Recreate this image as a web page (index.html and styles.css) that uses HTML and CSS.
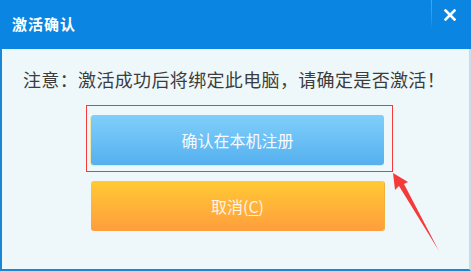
FILE: index.html
```html
<!DOCTYPE html>
<html lang="zh">
<head>
<meta charset="utf-8">
<link rel="stylesheet" href="styles.css">
</head>
<body>
<div class="window">
  <div class="titlebar">
    <span class="title">激活确认</span>
    <div class="title-tools">
      <span class="sep"></span>
      <button class="close" aria-label="关闭">
        <svg width="12" height="12" viewBox="0 0 12 12"><path d="M1.5 1.5 L10.5 10.5 M10.5 1.5 L1.5 10.5" stroke="#fff" stroke-width="2.6" stroke-linecap="square"/></svg>
      </button>
    </div>
  </div>
  <div class="content">
    <p class="notice">注意：激活成功后将绑定此电脑，请确定是否激活！</p>
    <div class="highlight">
      <button class="btn btn-blue">确认在本机注册</button>
    </div>
    <button class="btn btn-orange">取消(<u>C</u>)</button>
  </div>
  <svg class="arrow" width="60" height="90" viewBox="0 0 60 90">
    <polygon points="3,2 5,19 9,15 49,80 14,13 18,11" fill="#f53a3a"/>
  </svg>
</div>
</body>
</html>
```

FILE: styles.css
```css
* { box-sizing: border-box; }
html, body {
  margin: 0;
  padding: 0;
  width: 471px;
  height: 271px;
  overflow: hidden;
  background: #eef8fb;
}
.window {
  position: relative;
  width: 471px;
  height: 271px;
  display: flex;
  flex-direction: column;
  background: #eef8fb;
  border-left: 2px solid #1a86d6;
  border-right: 2px solid #c9dde8;
  border-bottom: 2px solid #1a86d6;
  font-family: "Noto Sans CJK SC", "Noto Sans", sans-serif;
}
.titlebar {
  height: 49px;
  margin-left: -2px;
  margin-right: -2px;
  background: #0a85e2;
  display: flex;
  align-items: flex-start;
  justify-content: space-between;
  flex-shrink: 0;
}
.title {
  color: #fff;
  font-weight: bold;
  font-size: 15px;
  letter-spacing: 1px;
  line-height: 20px;
  margin-top: 14px;
  margin-left: 12px;
}
.title-tools {
  display: flex;
  align-items: flex-start;
  height: 30px;
}
.sep {
  width: 1px;
  height: 29px;
  background: linear-gradient(#4aa6ea, #2a95e4 70%, #0a85e2);
}
.close {
  border: 0;
  background: transparent;
  padding: 0;
  margin: 9px 15px 0 12px;
  width: 12px;
  height: 12px;
  display: flex;
}
.content {
  display: flex;
  flex-direction: column;
  padding-top: 18px;
}
.notice {
  margin: 0 0 0 21px;
  font-size: 18px;
  line-height: 24px;
  color: #3c3c3c;
  white-space: nowrap;
  letter-spacing: 0.35px;
}
.highlight {
  margin: 14px 0 0 84px;
  width: 307px;
  border: 1px solid #f23c3c;
  padding: 9px 7px 6px 4px;
}
.btn {
  width: 293px;
  height: 50px;
  border: 0;
  border-radius: 3px;
  font-family: "Noto Sans CJK SC", "Noto Sans", sans-serif;
  font-size: 16px;
  color: #f6fbff;
  display: flex;
  align-items: center;
  justify-content: center;
  padding: 0;
}
.btn-blue {
  background: linear-gradient(#80cffb, #55b0ee);
  box-shadow: -1px 1px 0 #f2e7a8;
}
.btn-orange {
  margin: 9px 0 0 89px;
  background: linear-gradient(#ffca34, #ff9d3d);
  color: #fff4e6;
  box-shadow: 1px 0 0 #f3b13a;
}
.btn u { text-underline-offset: 2px; }
.arrow {
  position: absolute;
  left: 388px;
  top: 171px;
}
```
